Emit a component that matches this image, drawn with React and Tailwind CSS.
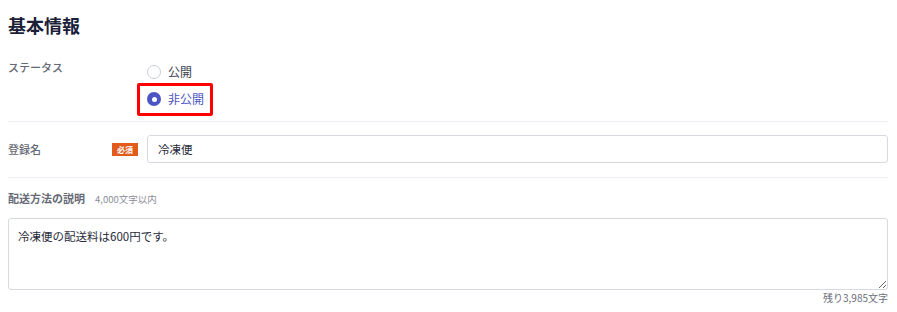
import React from "react";

const font = { fontFamily: '"Noto Sans CJK JP", "Noto Sans", sans-serif' };

function Radio({ checked, label }) {
  return (
    <label className="flex items-center gap-[7px] h-[18px] cursor-pointer">
      {checked ? (
        <span className="w-[14px] h-[14px] rounded-full bg-[#4a54c4] flex items-center justify-center">
          <span className="w-[5px] h-[5px] rounded-full bg-white" />
        </span>
      ) : (
        <span className="w-[14px] h-[14px] rounded-full border-[1.5px] border-[#c9ccd9] bg-white" />
      )}
      <span className={`text-[12px] leading-[18px] ${checked ? "text-[#4a54c4]" : "text-[#3a3d4e]"}`}>{label}</span>
    </label>
  );
}

export default function App() {
  return (
    <div className="w-[897px] h-[312px] bg-white pl-2 pr-[9px] pt-[11px]" style={font}>
      <h2 className="text-[18px] leading-[28px] font-bold text-[#1c1e3a]">基本情報</h2>

      <div className="flex mt-[19px] pb-[13px] border-b border-[#eceef3]">
        <div className="w-[139px] text-[11px] leading-[18px] font-medium text-[#666a75]">ステータス</div>
        <div className="flex flex-col gap-[9px] pt-[5px]">
          <Radio label="公開" />
          <div className="relative">
            <Radio checked label="非公開" />
            <div className="absolute left-[-10px] top-[-7px] w-[76px] h-[33px] border-[3px] border-[#ff0000] rounded-[2px] pointer-events-none" />
          </div>
        </div>
      </div>

      <div className="flex items-center pt-[13px] pb-[14px] border-b border-[#eceef3]">
        <div className="w-[104px] text-[11px] leading-[18px] font-medium text-[#666a75]">登録名</div>
        <span className="w-[26px] h-[13px] bg-[#e25a1c] text-white text-[8px] leading-[13px] font-bold text-center">必須</span>
        <input
          className="ml-[9px] flex-1 h-[28px] border border-[#d6d9e4] rounded-[3px] px-[10px] text-[11.5px] text-[#2a2c3a] outline-none"
          defaultValue="冷凍便"
          style={font}
        />
      </div>

      <div className="pt-[11px]">
        <div className="flex items-baseline gap-[10px]">
          <span className="text-[11px] leading-[18px] font-bold text-[#666a75]">配送方法の説明</span>
          <span className="text-[9.5px] text-[#8a8d98]">4,000文字以内</span>
        </div>
        <textarea
          className="mt-[11px] block w-full h-[72px] border border-[#d6d9e4] rounded-[3px] px-[9px] py-[8px] text-[11.5px] leading-[18px] text-[#2a2c3a] outline-none resize-y"
          defaultValue="冷凍便の配送料は600円です。"
          style={font}
        />
        <div className="text-right text-[10px] leading-[14px] mt-[1px] text-[#6b6e7a]">残り3,985文字</div>
      </div>
    </div>
  );
}
